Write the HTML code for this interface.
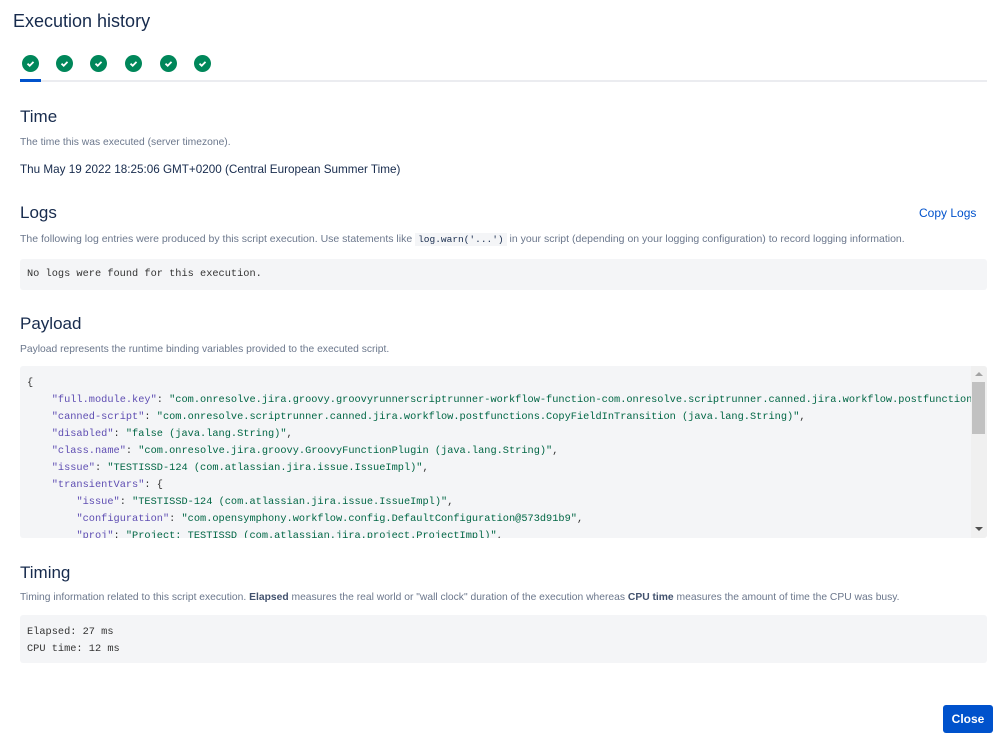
<!DOCTYPE html>
<html><head><meta charset="utf-8"><style>
*{margin:0;padding:0;box-sizing:border-box}
body{width:999px;height:747px;background:#fff;font-family:"Liberation Sans",sans-serif;color:#172b4d;position:relative;overflow:hidden}
.a{position:absolute;white-space:nowrap}
h1{font-weight:normal;font-size:18px;position:absolute;left:13px;top:11px;color:#172b4d}
h2{font-weight:normal;font-size:17px;position:absolute;left:20px;color:#172b4d}
.d{position:absolute;left:20px;font-size:10.3px;color:#6b778c;white-space:nowrap}
.chk{position:absolute;top:55px;width:17px;height:17px;border-radius:50%;background:#00875a}
.chk svg{position:absolute;left:0;top:0}
.box{position:absolute;left:20px;width:967px;background:#f4f5f7;border-radius:3px}
.mono{font-family:"Liberation Mono",monospace;font-size:10.3px;color:#333;white-space:pre}
.k{color:#5e4db2}.s{color:#006644}
</style></head><body>
<h1>Execution history</h1>
<div class="chk" style="left:22px"><svg width="17" height="17"><path d="M5.5 8.7l2.2 2 3.8-3.8" stroke="#fff" stroke-width="1.8" fill="none"/></svg></div>
<div class="chk" style="left:56px"><svg width="17" height="17"><path d="M5.5 8.7l2.2 2 3.8-3.8" stroke="#fff" stroke-width="1.8" fill="none"/></svg></div>
<div class="chk" style="left:90px"><svg width="17" height="17"><path d="M5.5 8.7l2.2 2 3.8-3.8" stroke="#fff" stroke-width="1.8" fill="none"/></svg></div>
<div class="chk" style="left:125px"><svg width="17" height="17"><path d="M5.5 8.7l2.2 2 3.8-3.8" stroke="#fff" stroke-width="1.8" fill="none"/></svg></div>
<div class="chk" style="left:160px"><svg width="17" height="17"><path d="M5.5 8.7l2.2 2 3.8-3.8" stroke="#fff" stroke-width="1.8" fill="none"/></svg></div>
<div class="chk" style="left:194px"><svg width="17" height="17"><path d="M5.5 8.7l2.2 2 3.8-3.8" stroke="#fff" stroke-width="1.8" fill="none"/></svg></div>
<div class="a" style="left:20px;top:80px;width:967px;height:2px;background:#ebecf0"></div>
<div class="a" style="left:20px;top:79px;width:21px;height:3px;background:#0052cc"></div>

<h2 style="top:107px">Time</h2>
<div class="d" style="top:137px">The time this was executed (server timezone).</div>
<div class="a" style="left:20px;top:163px;font-size:11.7px">Thu May 19 2022 18:25:06 GMT+0200 (Central European Summer Time)</div>

<h2 style="top:203px">Logs</h2>
<div class="a" style="left:919px;top:206px;font-size:12px;color:#0052cc">Copy Logs</div>
<div class="d" style="top:233px;font-size:10.5px">The following log entries were produced by this script execution. Use statements like <span class="mono" style="background:#f4f5f7;color:#172b4d;padding:1px 3px;font-size:9.5px">log.warn('...')</span> in your script (depending on your logging configuration) to record logging information.</div>
<div class="box" style="top:259px;height:31px"><div class="mono a" style="left:7px;top:9px">No logs were found for this execution.</div></div>

<h2 style="top:314px">Payload</h2>
<div class="d" style="top:344px">Payload represents the runtime binding variables provided to the executed script.</div>
<div class="box" style="top:366px;height:172px;overflow:hidden">
<div class="mono a" style="left:7px;top:9px;line-height:17px;width:944px;overflow:hidden">{
    <span class="k">"full.module.key"</span>: <span class="s">"com.onresolve.jira.groovy.groovyrunnerscriptrunner-workflow-function-com.onresolve.scriptrunner.canned.jira.workflow.postfunctions</span>
    <span class="k">"canned-script"</span>: <span class="s">"com.onresolve.scriptrunner.canned.jira.workflow.postfunctions.CopyFieldInTransition (java.lang.String)"</span>,
    <span class="k">"disabled"</span>: <span class="s">"false (java.lang.String)"</span>,
    <span class="k">"class.name"</span>: <span class="s">"com.onresolve.jira.groovy.GroovyFunctionPlugin (java.lang.String)"</span>,
    <span class="k">"issue"</span>: <span class="s">"TESTISSD-124 (com.atlassian.jira.issue.IssueImpl)"</span>,
    <span class="k">"transientVars"</span>: {
        <span class="k">"issue"</span>: <span class="s">"TESTISSD-124 (com.atlassian.jira.issue.IssueImpl)"</span>,
        <span class="k">"configuration"</span>: <span class="s">"com.opensymphony.workflow.config.DefaultConfiguration@573d91b9"</span>,
        <span class="k">"proj"</span>: <span class="s">"Project: TESTISSD (com.atlassian.jira.project.ProjectImpl)"</span>,</div>
<div class="a" style="left:951px;top:0;width:16px;height:172px;background:#f0f0f0"></div>
<div class="a" style="left:952px;top:16px;width:13px;height:52px;background:#c1c1c1"></div>
<div class="a" style="left:955px;top:6px;width:0;height:0;border-left:4px solid transparent;border-right:4px solid transparent;border-bottom:4px solid #a3a3a3"></div>
<div class="a" style="left:955px;top:161px;width:0;height:0;border-left:4px solid transparent;border-right:4px solid transparent;border-top:4px solid #505050"></div>
</div>

<h2 style="top:563px">Timing</h2>
<div class="d" style="top:592px">Timing information related to this script execution. <b style="color:#42526e">Elapsed</b> measures the real world or "wall clock" duration of the execution whereas <b style="color:#42526e">CPU time</b> measures the amount of time the CPU was busy.</div>
<div class="box" style="top:615px;height:48px"><div class="mono a" style="left:7px;top:9px;line-height:17px">Elapsed: 27 ms
CPU time: 12 ms</div></div>

<div class="a" style="left:943px;top:705px;width:50px;height:28px;background:#0052cc;border-radius:3px;color:#fff;font-size:12px;font-weight:bold;text-align:center;line-height:28px">Close</div>
</body></html>
